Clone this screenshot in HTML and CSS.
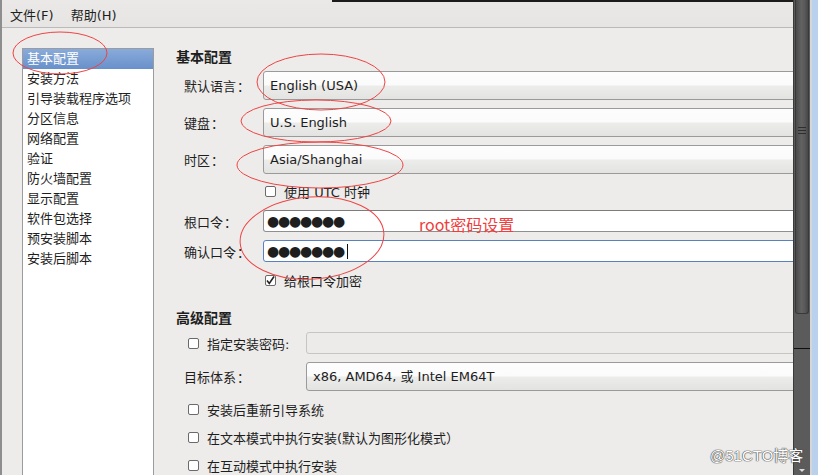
FILE: index.html
```html
<!DOCTYPE html>
<html lang="zh-CN">
<head>
  <meta charset="UTF-8">
  <meta name="viewport" content="width=device-width, initial-scale=1.0">
  <title>Kickstart 配置程序</title>
  <link rel="stylesheet" href="styles.css">
</head>
<body>

<div class="screen">
  <div class="window">
    <div class="menubar">
      <span class="menu-item">文件(F)</span>
      <span class="menu-item">帮助(H)</span>
    </div>

    <div class="main">
      <div class="sidebar">
        <ul class="nav-list">
          <li class="nav-item selected">基本配置</li>
          <li class="nav-item">安装方法</li>
          <li class="nav-item">引导装载程序选项</li>
          <li class="nav-item">分区信息</li>
          <li class="nav-item">网络配置</li>
          <li class="nav-item">验证</li>
          <li class="nav-item">防火墙配置</li>
          <li class="nav-item">显示配置</li>
          <li class="nav-item">软件包选择</li>
          <li class="nav-item">预安装脚本</li>
          <li class="nav-item">安装后脚本</li>
        </ul>
      </div>

      <div class="content">
        <h2 class="section-title">基本配置</h2>

        <div class="row first">
          <span class="label">默认语言<span class="colon">：</span></span>
          <div class="combo">English (USA)</div>
        </div>
        <div class="row">
          <span class="label">键盘<span class="colon">：</span></span>
          <div class="combo">U.S. English</div>
        </div>
        <div class="row">
          <span class="label">时区<span class="colon">：</span></span>
          <div class="combo">Asia/Shanghai</div>
        </div>
        <div class="row check-row basic-check">
          <span class="box"></span>
          <span>使用 UTC 时钟</span>
        </div>
        <div class="row entry-row">
          <span class="label">根口令<span class="colon">：</span></span>
          <div class="entry"><span class="dots">●●●●●●●</span></div>
        </div>
        <div class="row entry-row2">
          <span class="label">确认口令<span class="colon">：</span></span>
          <div class="entry focus"><span class="dots">●●●●●●●</span><span class="caret"></span></div>
        </div>
        <div class="row check-row basic-check last-check">
          <span class="box checked">
            <svg width="11" height="11" viewBox="0 0 11 11"><path d="M2 5.5 L4.3 8.5 L9 1.5" fill="none" stroke="#222" stroke-width="1.6"/></svg>
          </span>
          <span>给根口令加密</span>
        </div>

        <h2 class="section-title advanced">高级配置</h2>

        <div class="row first small">
          <div class="adv-label">
            <span class="box"></span>
            <span>指定安装密码:</span>
          </div>
          <div class="entry disabled"></div>
        </div>
        <div class="row">
          <span class="label adv-width">目标体系<span class="colon">：</span></span>
          <div class="combo">x86, AMD64, 或 Intel EM64T</div>
        </div>
        <div class="row check-row adv-check first-adv">
          <span class="box"></span>
          <span>安装后重新引导系统</span>
        </div>
        <div class="row check-row adv-check">
          <span class="box"></span>
          <span>在文本模式中执行安装(默认为图形化模式）</span>
        </div>
        <div class="row check-row adv-check">
          <span class="box"></span>
          <span>在互动模式中执行安装</span>
        </div>
      </div>
    </div>
  </div>

  <div class="scrollbar">
    <div class="thumb">
      <span class="grip"></span>
    </div>
    <div class="track-line"></div>
    <span class="arrow"></span>
  </div>
  <div class="edge"></div>
  <div class="desktop"></div>
</div>

<!-- 注释：红色圈 -->
<svg class="marks" width="818" height="475" viewBox="0 0 818 475">
  <ellipse cx="60" cy="53" rx="47" ry="21" />
  <ellipse cx="321" cy="82" rx="64" ry="28" />
  <ellipse cx="316" cy="121" rx="75" ry="21" />
  <ellipse cx="320" cy="165" rx="83" ry="23" />
  <ellipse cx="312" cy="238" rx="72" ry="41" transform="rotate(-4 312 238)" />
</svg>
<div class="note">root密码设置</div>
<div class="watermark">@51CTO博客</div>

</body>
</html>
```

FILE: styles.css
```css
html, body {
  margin: 0;
  padding: 0;
}
body {
  width: 818px;
  height: 475px;
  overflow: hidden;
  position: relative;
  font-family: "DejaVu Sans", "Noto Sans CJK SC", sans-serif;
  font-size: 13px;
  color: #1e1e1e;
  background-color: #edecea;
}
.screen {
  display: flex;
  height: 475px;
}
.window {
  width: 791px;
  border-left: 2px solid #8e8e8e;
  display: flex;
  flex-direction: column;
  overflow: hidden;
  background-color: #edecea;
}
.menubar {
  height: 28px;
  box-sizing: border-box;
  border-bottom: 1px solid #bababa;
  background: linear-gradient(#1c1c1c, #1c1c1c) no-repeat 330px 0 / 100% 2px, linear-gradient(#eae9e7, #e6e5e3);
  display: flex;
  align-items: center;
  padding-left: 8px;
  padding-top: 1px;
}
.menu-item {
  margin-right: 17px;
}
.main {
  flex: 1;
  display: flex;
  min-height: 0;
}
.sidebar {
  width: 152px;
  padding: 20px 0 0 20px;
  box-sizing: border-box;
  flex-shrink: 0;
}
.nav-list {
  list-style: none;
  margin: 0;
  padding: 0;
  height: 100%;
  box-sizing: border-box;
  background-color: #fff;
  border: 1px solid #9c9c9c;
  border-bottom: none;
}
.nav-item {
  height: 20px;
  line-height: 20px;
  padding-left: 4px;
  white-space: nowrap;
}
.nav-item.selected {
  background: linear-gradient(#89abda, #6890ca);
  color: #fff;
}
.content {
  flex: 1;
  padding: 20px 0 0 22px;
  overflow: hidden;
}
.section-title {
  margin: 0;
  height: 18px;
  line-height: 18px;
  font-size: 14px;
  font-weight: bold;
}
.section-title.advanced {
  margin-top: 20px;
}
.row {
  display: flex;
  align-items: center;
  margin-top: 8px;
  margin-right: -6px;
  padding-left: 8px;
}
.row.first {
  margin-top: 5px;
}
.label {
  width: 79px;
  flex-shrink: 0;
  white-space: nowrap;
}
.label.adv-width {
  width: 122px;
}
.colon {
  font-family: "Noto Sans CJK TC", sans-serif;
  margin-left: 1px;
}
.combo {
  flex: 1;
  height: 29px;
  box-sizing: border-box;
  border: 1px solid #9a9a9a;
  border-radius: 3px;
  padding-left: 6px;
  line-height: 27px;
  background: linear-gradient(#fdfdfd 0%, #fbfbfb 48%, #ececeb 52%, #e3e3e2 100%);
  white-space: nowrap;
}
.entry {
  flex: 1;
  height: 22px;
  box-sizing: border-box;
  border: 1px solid #8f8f8f;
  border-top-color: #7c7c7c;
  border-radius: 3px;
  background-color: #fff;
  padding-left: 3px;
  display: flex;
  align-items: center;
}
.entry.focus {
  border-color: #5a80bd;
}
.entry.disabled {
  background-color: #ecebe9;
  border-color: #c6c5c3;
}
.entry-row {
  margin-top: 10px;
}
.dots {
  font-family: "DejaVu Sans", sans-serif;
  font-size: 14px;
  letter-spacing: -1.2px;
  line-height: 20px;
}
.caret {
  display: inline-block;
  width: 1px;
  height: 15px;
  margin-left: 3px;
  background-color: #111;
}
.check-row {
  height: 18px;
}
.basic-check {
  padding-left: 89px;
}
.last-check {
  margin-top: 9px;
}
.adv-check {
  padding-left: 12px;
  margin-top: 10px;
}
.adv-check.first-adv {
  margin-top: 9px;
}
.box {
  width: 11px;
  height: 11px;
  box-sizing: border-box;
  border: 1px solid #6a6a6a;
  border-radius: 2px;
  background-color: #fff;
  margin-right: 8px;
  flex-shrink: 0;
  position: relative;
}
.box svg {
  position: absolute;
  left: -1px;
  top: -1px;
}
.adv-label {
  width: 122px;
  flex-shrink: 0;
  display: flex;
  align-items: center;
  padding-left: 4px;
  box-sizing: border-box;
}
.scrollbar {
  width: 17px;
  background-color: #5b5b5b;
  border-left: 1px solid #3a3a3a;
  box-sizing: border-box;
  position: relative;
  display: flex;
  flex-direction: column;
}
.thumb {
  height: 314px;
  margin: 0 1px;
  box-sizing: border-box;
  border: 1px solid #393939;
  border-top: none;
  border-radius: 0 0 3px 3px;
  background: linear-gradient(90deg, #4b4b4b, #626262 45%, #5a5a5a 70%, #474747);
  display: flex;
  justify-content: center;
  padding-top: 127px;
}
.grip {
  width: 8px;
  height: 8px;
  background: repeating-linear-gradient(#2e2e2e 0 1px, transparent 1px 3px);
}
.track-line {
  height: 1px;
  margin-top: 34px;
  background-color: #0e0e0e;
}
.arrow {
  position: absolute;
  left: 5px;
  bottom: 3px;
  border-left: 3px solid transparent;
  border-right: 3px solid transparent;
  border-top: 3px solid #ddd;
}
.edge {
  width: 2px;
  background-color: #d4d6d8;
}
.desktop {
  flex: 1;
  background-color: #b9d1ec;
}
.marks {
  position: absolute;
  left: 0;
  top: 0;
  pointer-events: none;
}
.marks ellipse {
  fill: none;
  stroke: #ee4444;
  stroke-width: 1;
}
.note {
  position: absolute;
  left: 419px;
  top: 213px;
  font-family: "Noto Sans CJK SC", sans-serif;
  font-size: 16px;
  line-height: 22px;
  color: #f03c3c;
}
.watermark {
  position: absolute;
  left: 710px;
  top: 446px;
  font-family: "Liberation Sans", "Noto Sans CJK SC", sans-serif;
  font-size: 15px;
  line-height: 20px;
  color: #fff;
  text-shadow: 0 0 1px #444, 0 0 1px #444, 0 0 1px #444;
}
```
